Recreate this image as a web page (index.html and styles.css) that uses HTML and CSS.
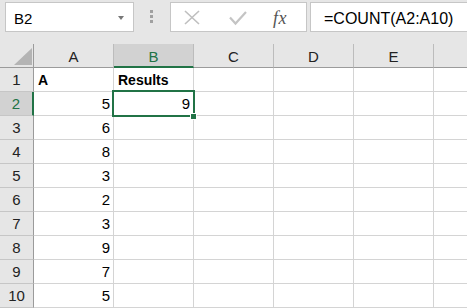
FILE: index.html
```html
<!DOCTYPE html>
<html lang="en">

<head>
  <meta charset="UTF-8">
  <meta name="viewport" content="width=device-width, initial-scale=1.0">
  <title>COUNT</title>
  <link rel="stylesheet" href="styles.css">
</head>

<body>
  <div class="toolbar">
    <div class="name-box">
      <span>B2</span>
      <span class="caret"></span>
    </div>
    <div class="grip"><i></i><i></i><i></i></div>
    <div class="fn-box">
      <svg class="cancel" width="16" height="15" viewBox="0 0 16 15">
        <path d="M1 1L15 14M15 1L1 14" stroke="#bfbfbf" stroke-width="1.6" fill="none" />
      </svg>
      <svg class="enter" width="18" height="15" viewBox="0 0 18 15">
        <path d="M1 6.5L6.5 12.5L17 1" stroke="#c4c4c4" stroke-width="2.2" fill="none" />
      </svg>
      <span class="fx">fx</span>
    </div>
    <div class="formula">=COUNT(A2:A10)</div>
  </div>

  <div class="sheet">
    <div class="corner">
      <svg width="18" height="17" viewBox="0 0 18 17">
        <path d="M18 0V17H0Z" fill="#b4b4b4" />
      </svg>
    </div>
    <div class="ch">A</div>
    <div class="ch on">B</div>
    <div class="ch">C</div>
    <div class="ch">D</div>
    <div class="ch">E</div>
    <div class="ch last"></div>

    <div class="rh">1</div>
    <div class="cell bold">A</div>
    <div class="cell bold">Results</div>
    <div class="cell"></div>
    <div class="cell"></div>
    <div class="cell"></div>
    <div class="cell last"></div>

    <div class="rh on">2</div>
    <div class="cell num">5</div>
    <div class="cell num">9</div>
    <div class="cell"></div>
    <div class="cell"></div>
    <div class="cell"></div>
    <div class="cell last"></div>

    <div class="rh">3</div>
    <div class="cell num">6</div>
    <div class="cell"></div>
    <div class="cell"></div>
    <div class="cell"></div>
    <div class="cell"></div>
    <div class="cell last"></div>

    <div class="rh">4</div>
    <div class="cell num">8</div>
    <div class="cell"></div>
    <div class="cell"></div>
    <div class="cell"></div>
    <div class="cell"></div>
    <div class="cell last"></div>

    <div class="rh">5</div>
    <div class="cell num">3</div>
    <div class="cell"></div>
    <div class="cell"></div>
    <div class="cell"></div>
    <div class="cell"></div>
    <div class="cell last"></div>

    <div class="rh">6</div>
    <div class="cell num">2</div>
    <div class="cell"></div>
    <div class="cell"></div>
    <div class="cell"></div>
    <div class="cell"></div>
    <div class="cell last"></div>

    <div class="rh">7</div>
    <div class="cell num">3</div>
    <div class="cell"></div>
    <div class="cell"></div>
    <div class="cell"></div>
    <div class="cell"></div>
    <div class="cell last"></div>

    <div class="rh">8</div>
    <div class="cell num">9</div>
    <div class="cell"></div>
    <div class="cell"></div>
    <div class="cell"></div>
    <div class="cell"></div>
    <div class="cell last"></div>

    <div class="rh">9</div>
    <div class="cell num">7</div>
    <div class="cell"></div>
    <div class="cell"></div>
    <div class="cell"></div>
    <div class="cell"></div>
    <div class="cell last"></div>

    <div class="rh">10</div>
    <div class="cell num">5</div>
    <div class="cell"></div>
    <div class="cell"></div>
    <div class="cell"></div>
    <div class="cell"></div>
    <div class="cell last"></div>

    <!-- active cell B2 -->
    <div class="selection"><span class="handle"></span></div>
  </div>
</body>

</html>
```

FILE: styles.css
```css
body {
  margin: 0;
  width: 467px;
  overflow: hidden;
  background: #e6e6e6;
  font-family: "Liberation Sans", Arial, sans-serif;
  color: #000;
}

/* formula bar */
.toolbar {
  display: flex;
  align-items: flex-start;
  height: 44px;
  padding: 2px 0 0 5px;
  box-sizing: border-box;
}

.name-box {
  width: 129px;
  height: 30px;
  box-sizing: border-box;
  display: flex;
  align-items: center;
  justify-content: space-between;
  padding: 3px 9px 0 8px;
  background: #fff;
  border: 1px solid #c6c6c6;
  font-size: 15px;
}

.caret {
  width: 0;
  height: 0;
  margin-top: -2px;
  border-left: 3.5px solid transparent;
  border-right: 3.5px solid transparent;
  border-top: 4px solid #777;
}

.grip {
  display: flex;
  flex-direction: column;
  gap: 2px;
  margin: 8px 0 0 16px;
}

.grip i {
  width: 3px;
  height: 3px;
  background: #a0a0a0;
}

.fn-box {
  display: flex;
  align-items: flex-start;
  width: 137px;
  height: 30px;
  box-sizing: border-box;
  margin-left: 17px;
  background: #fff;
  border: 1px solid #c6c6c6;
}

.cancel {
  margin: 7px 0 0 13px;
}

.enter {
  margin: 8px 0 0 29px;
}

.fx {
  margin: 5px 0 0 26px;
  font-family: "Liberation Serif", serif;
  font-style: italic;
  font-size: 18px;
  line-height: 20px;
  letter-spacing: 0.5px;
  color: #555;
}

.formula {
  flex: 1;
  height: 30px;
  box-sizing: border-box;
  margin-left: 3px;
  padding: 3px 0 0 13px;
  background: #fff;
  border: 1px solid #c6c6c6;
  border-right: none;
  font-size: 16px;
  line-height: 26px;
}

/* grid */
.sheet {
  position: relative;
  display: grid;
  grid-template-columns: 34px repeat(5, 80px) 1fr;
  grid-auto-rows: 24px;
  background: #fff;
  font-size: 15px;
}

.sheet > div {
  box-sizing: border-box;
}

.corner {
  display: flex;
  justify-content: flex-end;
  align-items: flex-end;
  padding: 0 1px 2px 0;
  background: #e6e6e6;
  border-right: 1px solid #9b9b9b;
  border-bottom: 1px solid #9b9b9b;
}

.ch {
  padding-top: 3px;
  line-height: 20px;
  text-align: center;
  color: #222;
  background: #e6e6e6;
  border-right: 1px solid #bcbcbc;
  border-bottom: 1px solid #9b9b9b;
}

.rh {
  padding-top: 1px;
  line-height: 22px;
  text-align: center;
  color: #222;
  background: #e6e6e6;
  border-right: 1px solid #9b9b9b;
  border-bottom: 1px solid #c6c6c6;
}

.ch.on,
.rh.on {
  color: #217346;
  background: #d2d2d2;
}

.ch.on {
  border-bottom: 2px solid #217346;
}

.rh.on {
  border-right: 2px solid #217346;
}

.cell {
  padding: 1px 3px 0 4px;
  line-height: 22px;
  border-right: 1px solid #d4d4d4;
  border-bottom: 1px solid #d4d4d4;
  white-space: nowrap;
}

.num {
  text-align: right;
}

.bold {
  font-size: 14px;
  font-weight: bold;
}

.last {
  border-right: none;
}

.selection {
  position: absolute;
  left: 112px;
  top: 46px;
  width: 83px;
  height: 27px;
  box-sizing: border-box;
  border: 2px solid #217346;
}

.handle {
  position: absolute;
  left: 76px;
  top: 21px;
  width: 7px;
  height: 7px;
  box-sizing: border-box;
  background: #217346;
  border: 1px solid #fff;
}
```
